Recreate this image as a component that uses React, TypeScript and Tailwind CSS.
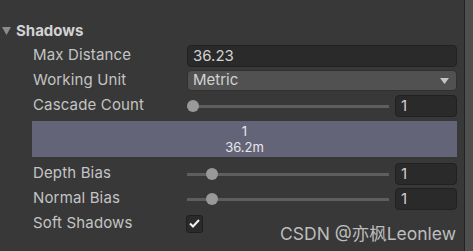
import React from "react";

const LABEL_W = "w-[154px]";

function Label({ children }: { children: React.ReactNode }) {
  return <div className={`${LABEL_W} shrink-0 text-[15px] tracking-[0.15px] text-[#c4c4c4]`}>{children}</div>;
}

function NumberBox({ value }: { value: string }) {
  return (
    <div className="h-[22px] w-[62px] shrink-0 rounded-[4px] border border-[#212121] bg-[#2a2a2a] px-[5px] text-[15px] leading-[20px] text-[#d2d2d2]">
      {value}
    </div>
  );
}

function Slider({ pos, value }: { pos: number; value: string }) {
  return (
    <div className="flex flex-1 items-center gap-[6px]">
      <div className="relative h-[12px] flex-1">
        <div className="absolute left-0 right-0 top-[5px] h-[3px] bg-[#5e5e5e]" />
        <div
          className="absolute top-0 h-[12px] w-[12px] rounded-full bg-[#999999]"
          style={{ left: pos }}
        />
      </div>
      <NumberBox value={value} />
    </div>
  );
}

function Row({ label, children }: { label: string; children: React.ReactNode }) {
  return (
    <div className="flex h-[25px] items-center">
      <Label>{label}</Label>
      {children}
    </div>
  );
}

export default function App() {
  return (
    <div
      className="relative flex h-[251px] w-[473px] overflow-hidden bg-[#383838]"
      style={{ fontFamily: "Inter, 'Noto Sans CJK SC', sans-serif" }}
    >
      <div className="flex-1 pl-[2px] pr-[7px] pt-[20px]">
        <div className="flex h-[23px] items-center pb-[1px]">
          <svg width="9" height="8" viewBox="0 0 9 8" className="shrink-0">
            <polygon points="0,0 9,0 4.5,8" fill="#8c8c8c" />
          </svg>
          <span className="ml-[5px] text-[15px] font-bold text-[#d2d2d2]">Shadows</span>
        </div>
        <div className="pl-[31px]">
          <Row label="Max Distance">
            <div className="h-[22px] flex-1 rounded-[4px] border border-[#212121] bg-[#2a2a2a] px-[5px] text-[15px] leading-[20px] text-[#d2d2d2]">
              36.23
            </div>
          </Row>
          <Row label="Working Unit">
            <div className="flex h-[21px] flex-1 items-center justify-between rounded-[4px] border border-[#303030] bg-[#515151] pl-[5px] pr-[7px] text-[15px] text-[#d2d2d2]">
              <span>Metric</span>
              <svg width="9" height="6" viewBox="0 0 9 6">
                <polygon points="0,0 9,0 4.5,6" fill="#c4c4c4" />
              </svg>
            </div>
          </Row>
          <Row label="Cascade Count">
            <Slider pos={0} value="1" />
          </Row>
          <div className="mt-[3px] mb-[4px] -ml-[1px] flex h-[36px] flex-col items-center justify-center bg-[#646479] text-[13px] leading-[16px] text-[#e8e8e8]">
            <span>1</span>
            <span>36.2m</span>
          </div>
          <Row label="Depth Bias">
            <Slider pos={19} value="1" />
          </Row>
          <Row label="Normal Bias">
            <Slider pos={19} value="1" />
          </Row>
          <Row label="Soft Shadows">
            <div className="-ml-[1px] flex h-[18px] w-[17px] items-center justify-center rounded-[3px] border border-[#1e1e1e] bg-[#2a2a2a]">
              <svg width="11" height="9" viewBox="0 0 11 9">
                <polyline points="1,4.5 4,7.5 10,1" fill="none" stroke="#f0f0f0" strokeWidth="2" />
              </svg>
            </div>
          </Row>
        </div>
      </div>
      <div className="w-[1px] bg-[#232323]" />
      <div className="w-[8px] bg-[#4f4f4f]" />
      <div className="absolute left-[280px] top-[221px] text-[17.5px] text-[#bdbdbd]">
        CSDN @亦枫Leonlew
      </div>
    </div>
  );
}
